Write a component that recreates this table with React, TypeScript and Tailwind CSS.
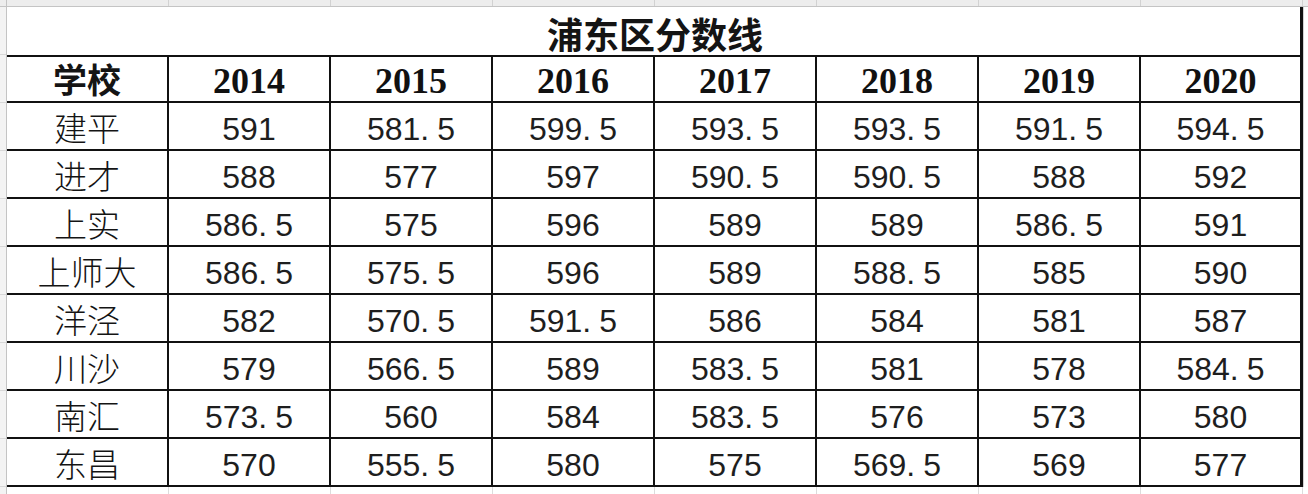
import React from "react";

const years = ["2014", "2015", "2016", "2017", "2018", "2019", "2020"];

const rows: [string, string[]][] = [
  ["建平", ["591", "581.5", "599.5", "593.5", "593.5", "591.5", "594.5"]],
  ["进才", ["588", "577", "597", "590.5", "590.5", "588", "592"]],
  ["上实", ["586.5", "575", "596", "589", "589", "586.5", "591"]],
  ["上师大", ["586.5", "575.5", "596", "589", "588.5", "585", "590"]],
  ["洋泾", ["582", "570.5", "591.5", "586", "584", "581", "587"]],
  ["川沙", ["579", "566.5", "589", "583.5", "581", "578", "584.5"]],
  ["南汇", ["573.5", "560", "584", "583.5", "576", "573", "580"]],
  ["东昌", ["570", "555.5", "580", "575", "569.5", "569", "577"]],
];

const cjk = { fontFamily: '"Noto Sans CJK SC", sans-serif' };
const serif = { fontFamily: '"Liberation Serif", "Noto Sans CJK SC", serif' };
const sans = { fontFamily: '"Liberation Sans", Arial, sans-serif' };

function Num({ v }: { v: string }) {
  const [a, b] = v.split(".");
  return (
    <span style={sans} className="text-[32px] leading-none text-[#1e1e1e]">
      {a}
      {b !== undefined && (
        <>
          <span className="inline-block w-[17px] text-left">.</span>
          {b}
        </>
      )}
    </span>
  );
}

export default function App() {
  const cols = Array.from({ length: 8 });
  return (
    <div className="w-[1308px] h-[494px] bg-white overflow-hidden flex flex-col">
      {/* Excel column header strip */}
      <div className="h-[7px] flex bg-[#ededed] border-b border-[#c4c4c4] shrink-0">
        <div className="w-[7px] border-r border-[#c4c4c4]" />
        {cols.map((_, i) => (
          <div key={i} className="w-[162px] border-r border-[#d2d2d2] shrink-0" />
        ))}
        <div className="flex-1" />
      </div>

      <div className="flex h-[480px] shrink-0">
        {/* row header strip */}
        <div className="w-[7px] shrink-0 bg-[#f3f3f3] border-r border-[#c4c4c4] flex flex-col">
          <div className="h-[48px] border-b border-[#d8d8d8]" />
          {Array.from({ length: 9 }).map((_, i) => (
            <div key={i} className="h-[48px] border-b border-[#d8d8d8]" />
          ))}
        </div>

        {/* table */}
        <div className="w-[1296px] shrink-0 flex flex-col">
          <div className="h-[48px] border-r-[3px] border-[#111] flex items-center justify-center">
            <span style={cjk} className="text-[36px] font-bold leading-none text-[#141414] pl-[3px] pt-[4px]">
              浦东区分数线
            </span>
          </div>
          <div className="border-t-2 border-[#111] border-r-[3px] flex flex-col">
            <div className="flex h-[48px] -mt-[2px]">
              <div className="w-[162px] h-[48px] shrink-0 border-r-2 border-b-2 border-[#111] flex items-center justify-center pt-[2px]">
                <span style={cjk} className="text-[34px] font-bold leading-none text-[#141414]">
                  学校
                </span>
              </div>
              {years.map((y, i) => (
                <div
                  key={y}
                  className={`h-[48px] shrink-0 border-b-2 border-[#111] flex items-center justify-center pt-[5px] ${
                    i === 6 ? "w-[159px]" : "w-[162px] border-r-2"
                  }`}
                >
                  <span style={serif} className="text-[36px] font-bold leading-none text-[#111]">
                    {y}
                  </span>
                </div>
              ))}
            </div>
            {rows.map(([name, vals]) => (
              <div key={name} className="flex h-[48px]">
                <div className="w-[162px] shrink-0 border-r-2 border-b-2 border-[#111] flex items-center justify-center pt-[2px]">
                  <span style={cjk} className="text-[33px] font-light leading-none text-[#141414]">
                    {name}
                  </span>
                </div>
                {vals.map((v, i) => (
                  <div
                    key={i}
                    className={`shrink-0 border-b-2 border-[#111] flex items-center justify-center pt-[6px] ${
                      i === 6 ? "w-[159px]" : "w-[162px] border-r-2"
                    }`}
                  >
                    <Num v={v} />
                  </div>
                ))}
              </div>
            ))}
          </div>
        </div>

        <div className="flex-1 border-l border-[#d2d2d2]" />
      </div>

      {/* bottom gridline strip */}
      <div className="flex-1 flex">
        <div className="w-[7px] bg-[#f3f3f3] border-r border-[#c4c4c4]" />
        {cols.map((_, i) => (
          <div key={i} className="w-[162px] border-r border-[#dcdcdc] shrink-0" />
        ))}
        <div className="flex-1" />
      </div>
    </div>
  );
}
